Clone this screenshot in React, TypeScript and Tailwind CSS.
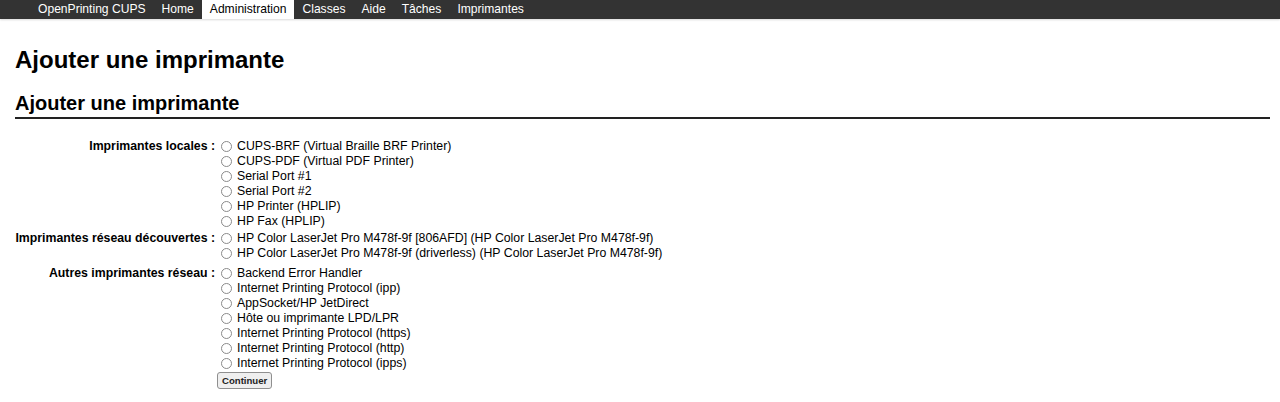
import React from "react";

const nav = ["OpenPrinting CUPS", "Home", "Administration", "Classes", "Aide", "Tâches", "Imprimantes"];

const groups: { label: string; items: string[]; mt: string }[] = [
  {
    label: "Imprimantes locales :",
    mt: "",
    items: [
      "CUPS-BRF (Virtual Braille BRF Printer)",
      "CUPS-PDF (Virtual PDF Printer)",
      "Serial Port #1",
      "Serial Port #2",
      "HP Printer (HPLIP)",
      "HP Fax (HPLIP)",
    ],
  },
  {
    label: "Imprimantes réseau découvertes :",
    mt: "mt-[2px]",
    items: [
      "HP Color LaserJet Pro M478f-9f [806AFD] (HP Color LaserJet Pro M478f-9f)",
      "HP Color LaserJet Pro M478f-9f (driverless) (HP Color LaserJet Pro M478f-9f)",
    ],
  },
  {
    label: "Autres imprimantes réseau :",
    mt: "mt-[5px]",
    items: [
      "Backend Error Handler",
      "Internet Printing Protocol (ipp)",
      "AppSocket/HP JetDirect",
      "Hôte ou imprimante LPD/LPR",
      "Internet Printing Protocol (https)",
      "Internet Printing Protocol (http)",
      "Internet Printing Protocol (ipps)",
    ],
  },
];

function Radio() {
  return <span className="inline-block w-[11px] h-[11px] rounded-full border border-[#8a8a8a] bg-white mr-[5px] shrink-0" />;
}

export default function App() {
  return (
    <div className="min-h-[402px] bg-white text-black" style={{ fontFamily: '"Liberation Sans", Arial, sans-serif' }}>
      <div className="h-[19px] bg-[#333333] flex pl-[30px] shadow-[0_1px_2px_rgba(0,0,0,0.15)]">
        {nav.map((n) => (
          <div
            key={n}
            className={
              "px-[8px] h-[19px] text-[12.1px] leading-[19px] " +
              (n === "Administration" ? "bg-white text-black" : "text-white")
            }
          >
            {n}
          </div>
        ))}
      </div>
      <div className="px-[15px]">
        <h1 className="text-[24px] font-bold leading-[28px] mt-[27px]">Ajouter une imprimante</h1>
        <h2 className="text-[20px] font-bold leading-[23px] mt-[18px] pb-[2px] border-b-2 border-[#222] mr-[-5px]">
          Ajouter une imprimante
        </h2>
        <div className="mt-[20px] text-[12.3px]">
          {groups.map((g) => (
            <div key={g.label} className={"flex " + g.mt}>
              <div className="w-[206px] text-right font-bold leading-[15px] pr-[6px] shrink-0">{g.label}</div>
              <div className="flex flex-col">
                {g.items.map((it) => (
                  <div key={it} className="flex items-center h-[15px] leading-[15px]">
                    <Radio />
                    <span>{it}</span>
                  </div>
                ))}
              </div>
            </div>
          ))}
          <div className="flex mt-[1px]">
            <div className="w-[202px] shrink-0" />
            <button className="text-[9.6px] leading-[13px] px-[4px] py-[1px] border border-[#8f8f8f] rounded-[3px] bg-[#efefef] font-bold text-[#222]">
              Continuer
            </button>
          </div>
        </div>
      </div>
    </div>
  );
}
